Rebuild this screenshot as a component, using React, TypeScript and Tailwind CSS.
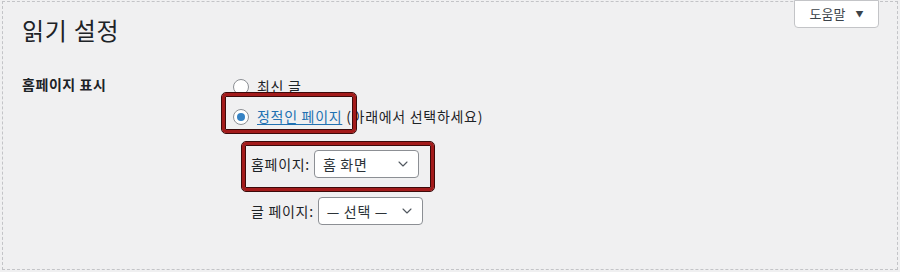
import { ChevronDown } from 'lucide-react';

const font = { fontFamily: '"Noto Sans CJK KR", "Noto Sans", sans-serif' };

function RedBox({ className }: { className: string }) {
    return (
        <div
            className={`pointer-events-none absolute rounded-[4px] border-[3px] border-[#a31b1b] outline outline-1 outline-[#3d0a0a] shadow-[inset_0_0_0_1px_#3d0a0a] ${className}`}
        />
    );
}

function Radio({ checked }: { checked?: boolean }) {
    return (
        <span className="flex h-4 w-4 shrink-0 items-center justify-center rounded-full border border-[#8c8f94] bg-white">
            {checked && <span className="h-2 w-2 rounded-full bg-[#3582c4]" />}
        </span>
    );
}

function Select({ value, className }: { value: string; className: string }) {
    return (
        <div className={`flex h-[28px] items-center justify-between rounded-[4px] border border-[#8c8f94] bg-white pl-[8px] pr-[7px] text-[14px] tracking-[0.05em] text-[#2c3338] ${className}`}>
            <span>{value}</span>
            <ChevronDown size={16} strokeWidth={1.6} className="text-[#50575e]" />
        </div>
    );
}

export default function App() {
    return (
        <div className="h-[272px] bg-[#f0f0f1] px-[2px] pt-px pb-[2px] text-[#1d2327]" style={font}>
            <div className="h-full border border-dashed border-[#c3c4c7]">
                <div className="flex items-start justify-between">
                    <h1 className="ml-[19px] mt-[13px] text-[24px] leading-[30px] font-normal tracking-[0.03em]">읽기 설정</h1>
                    <button className="-mt-[2px] mr-[18px] flex h-[28px] w-[85px] items-center justify-center gap-[10px] rounded-b-[4px] border border-[#c3c4c7] bg-white text-[13px] text-[#3c434a]">
                        도움말
                        <span className="text-[8px]">▼</span>
                    </button>
                </div>

                <div className="mt-[27px] flex">
                    <div className="-mt-[2px] w-[230px] shrink-0 pl-[19px] text-[14px] font-bold leading-[29px] tracking-[0.04em]">홈페이지 표시</div>
                    <div className="text-[14px] tracking-[0.05em]">
                        <ul>
                            <li className="flex h-[29px] items-center gap-[8px]">
                                <Radio />
                                <span className="-mt-px">최신 글</span>
                            </li>
                            <li className="relative mt-px flex h-[29px] items-center gap-[8px]">
                                <Radio checked />
                                <span>
                                    <a className="text-[#2271b1] underline underline-offset-2">정적인 페이지</a> (아래에서 선택하세요)
                                </span>
                                <RedBox className="-left-[11px] -top-[9px] h-[40px] w-[134px]" />
                            </li>
                        </ul>
                        <div className="ml-[18px] mt-[19px] flex flex-col gap-[19px]">
                            <div className="relative flex items-center gap-[4px]">
                                <span>홈페이지:</span>
                                <Select value="홈 화면" className="w-[105px]" />
                                <RedBox className="-left-[9px] -top-[8px] h-[49px] w-[192px]" />
                            </div>
                            <div className="flex items-center gap-[4px]">
                                <span>글 페이지:</span>
                                <Select value="— 선택 —" className="w-[105px]" />
                            </div>
                        </div>
                    </div>
                </div>
            </div>
        </div>
    );
}
